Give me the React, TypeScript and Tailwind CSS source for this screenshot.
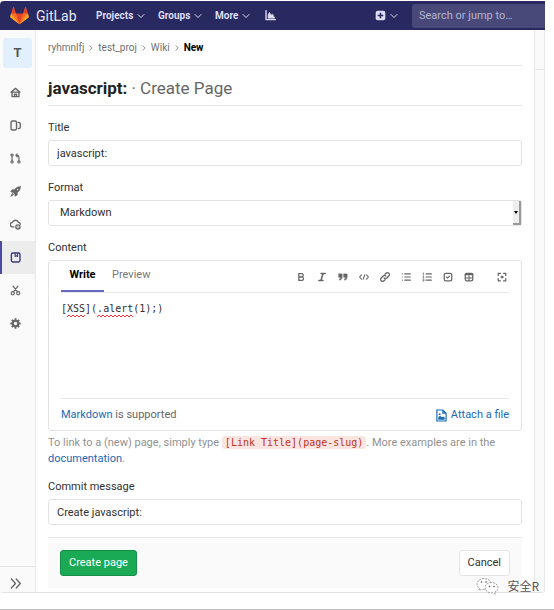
import type { ReactNode } from "react";

type IconProps = { children: ReactNode; className?: string };

function Icon({ children, className = "size-[11px]" }: IconProps) {
  return (
    <svg
      viewBox="0 0 16 16"
      className={`${className} shrink-0`}
      fill="none"
      stroke="currentColor"
      strokeWidth="2"
      strokeLinecap="round"
      strokeLinejoin="round"
      aria-hidden="true"
    >
      {children}
    </svg>
  );
}

function Tanuki() {
  return (
    <svg viewBox="0 0 36 36" className="size-[19px] shrink-0" aria-hidden="true">
      <path fill="#e24329" d="M2 14l9.38 9v-9l-4-12.28c-.205-.632-1.176-.632-1.38 0z" />
      <path fill="#e24329" d="M34 14l-9.38 9v-9l4-12.28c.205-.632 1.176-.632 1.38 0z" />
      <path fill="#e24329" d="M18 34.38 3 14h30z" />
      <path fill="#fc6d26" d="M18 34.38 11.38 14H2l4 11z" />
      <path fill="#fc6d26" d="M18 34.38 24.62 14H34l-4 11z" />
      <path fill="#fca326" d="M2 14 .1 20.16c-.18.565 0 1.2.5 1.56l17.42 12.66z" />
      <path fill="#fca326" d="m34 14 1.9 6.16c.18.565 0 1.2-.5 1.56L18 34.38z" />
    </svg>
  );
}

function Chevron() {
  return (
    <Icon className="size-2">
      <path d="m2 5 6 6 6-6" />
    </Icon>
  );
}

const navItems = [
  { label: "Projects", width: "w-[62px]" },
  { label: "Groups", width: "w-[57px]" },
  { label: "More", width: "w-[50px]" },
];

function Header() {
  return (
    <header className="flex h-[29px] items-center rounded-tl bg-[#292961] pl-[10px] text-[#dcdcf5]">
      <a href="#home" className="flex w-[86px] items-center gap-[7px] text-sm text-[#e6e6f5]">
        <Tanuki />
        GitLab
      </a>
      <nav className="flex items-center text-[10px] font-bold">
        {navItems.map((item) => (
          <button key={item.label} className={`flex items-center gap-1 ${item.width}`}>
            {item.label}
            <Chevron />
          </button>
        ))}
        <a href="#charts" aria-label="Charts">
          <Icon>
            <path d="M1.500 1v13H15" />
            <path d="M4.500 11.500V7l2-3.500L9 7.500l2-1.500 3 5.500z" fill="currentColor" strokeWidth="1" />
          </Icon>
        </a>
      </nav>
      <button className="ml-auto flex items-center gap-1" aria-label="New">
        <svg viewBox="0 0 16 16" className="size-[11px]" aria-hidden="true">
          <rect x="1" y="1" width="14" height="14" rx="3" fill="currentColor" />
          <path d="M8 4v8M4 8h8" stroke="#292961" strokeWidth="2.200" />
        </svg>
        <Chevron />
      </button>
      <input
        type="search"
        aria-label="Search or jump to"
        placeholder="Search or jump to…"
        className="ml-[14px] h-6 w-[133px] rounded-l-[3px] bg-[#484879] px-[7px] text-[11px] outline-none placeholder:text-[#b4b4d2]"
      />
    </header>
  );
}

const sideItems: { name: string; icon: ReactNode; active?: boolean }[] = [
  {
    name: "Project",
    icon: <path d="M1.500 7.500 8 2l6.500 5.500zM3 8v6h10V8M6.500 14v-3.500h3V14" />,
  },
  {
    name: "Repository",
    icon: (
      <>
        <rect x="1.500" y="1.500" width="8" height="13" rx="2" />
        <path d="M12 3.500c3 0 3 1 3 4.500s0 4.500-3 4.500" />
      </>
    ),
  },
  {
    name: "Merge requests",
    icon: (
      <g strokeWidth="1.700">
        <circle cx="3" cy="3" r="1.600" />
        <circle cx="3" cy="13" r="1.600" />
        <circle cx="13" cy="13" r="1.600" />
        <path d="M3 5v6M13 11V6c0-2-1-2.500-4-2.500M10.500 1.500 8.500 3.500l2 2" />
      </g>
    ),
  },
  {
    name: "CI / CD",
    icon: (
      <>
        <path
          fill="currentColor"
          strokeWidth="1"
          d="M15 1c-4 0-6.500 1.500-8.500 4.500H3L1 8.500l3 .5 3 3 .5 3 3-2V9.500C13.500 7.500 15 5 15 1z"
        />
        <circle cx="11" cy="5" r="1" fill="#fafafa" stroke="none" />
        <path strokeWidth="1.500" d="m3.500 11-2 3.500L5 12.500" />
      </>
    ),
  },
  {
    name: "Operations",
    icon: (
      <>
        <path d="M5.500 11.500H4A3.200 3.200 0 0 1 3.500 5 4.800 4.800 0 0 1 12.500 5c1.500.3 2.500 1.200 2.500 2.500" />
        <circle cx="11.500" cy="11.500" r="3" />
        <path d="M11.500 11.500h.01" />
      </>
    ),
  },
  {
    name: "Wiki",
    active: true,
    icon: (
      <>
        <rect x="2" y="1.500" width="12.500" height="13" rx="2" />
        <path d="M7.500 2v4.500L9.300 5.500 11 6.500V2" strokeWidth="1.500" />
      </>
    ),
  },
  {
    name: "Snippets",
    icon: (
      <g strokeWidth="1.700">
        <circle cx="4" cy="12" r="2.300" />
        <circle cx="12" cy="12" r="2.300" />
        <path d="M5 10 11.500 1.500M11 10 4.500 1.500" />
      </g>
    ),
  },
  {
    name: "Settings",
    icon: (
      <>
        <circle cx="8" cy="8" r="4" strokeWidth="3" />
        <path
          strokeLinecap="butt"
          strokeWidth="2.800"
          d="M8 .5v3M8 12.500v3M.5 8h3M12.500 8h3M2.700 2.700l2 2M11.300 11.300l2 2M2.700 13.300l2-2M11.300 4.700l2-2"
        />
      </>
    ),
  },
];

function Sidebar() {
  return (
    <aside className="flex w-9 shrink-0 flex-col border-r border-[#e8e8e8] bg-[#fafafa] text-[#666]">
      <a
        href="#project"
        className="mx-[3px] my-2 flex h-[30px] items-center justify-center rounded-[3px] bg-[#e1f0fc] text-[13px] font-bold text-[#555]"
      >
        T
      </a>
      <nav>
        {sideItems.map((item) => (
          <a
            key={item.name}
            href="#section"
            aria-label={item.name}
            className={
              item.active
                ? "flex h-[33px] items-center justify-center border-l-2 border-[#4b4ba3] bg-[#ececec] pr-[6px] text-[#393982]"
                : "flex h-[33px] items-center justify-center pr-1"
            }
          >
            <Icon>{item.icon}</Icon>
          </a>
        ))}
      </nav>
      <button
        aria-label="Expand sidebar"
        className="mt-auto flex h-[26px] items-center justify-center border-t border-[#e5e5e5] pt-2 pr-1"
      >
        <Icon>
          <path d="m2 1.500 6 6.500-6 6.500M9 1.500 15 8l-6 6.500" />
        </Icon>
      </button>
    </aside>
  );
}

const tools: { name: string; icon: ReactNode }[] = [
  { name: "Bold", icon: <path d="M4.500 2.500h4.500a2.500 2.500 0 0 1 0 5.200H4.500zM4.500 8h5.300a2.800 2.800 0 0 1 0 5.500H4.500z" /> },
  { name: "Italic", icon: <path d="M6.500 2.500H13M3 13.500h6.500M9.700 2.500l-3.400 11" strokeWidth="2.500" /> },
  {
    name: "Quote",
    icon: (
      <path
        fill="currentColor"
        strokeWidth="1"
        d="M1.500 3h5v5c0 3-1.500 4.500-4 5v-2c1.500-.5 1.800-1.500 1.800-2.800H1.500zM9.500 3h5v5c0 3-1.500 4.500-4 5v-2c1.500-.5 1.800-1.500 1.800-2.800H9.500z"
      />
    ),
  },
  { name: "Code", icon: <path d="M4 4.500.9 8 4 11.500M12 4.500 15.100 8 12 11.500M9.200 4.500l-2.400 7" strokeWidth="1.800" /> },
  {
    name: "Link",
    icon: (
      <path d="M6.500 9.500a3 3 0 0 0 4.500 0l3-3a3 3 0 0 0-4.500-4.500L8 3.500M9.500 6.500a3 3 0 0 0-4.500 0l-3 3A3 3 0 0 0 6.500 14L8 12.500" />
    ),
  },
  {
    name: "Bulleted list",
    icon: <path d="M2 3h.01M2 8h.01M2 13h.01M6 3h9M6 8h9M6 13h9" strokeWidth="1.800" />,
  },
  {
    name: "Numbered list",
    icon: (
      <>
        <path d="M6.500 3H15M6.500 8H15M6.500 13H15" strokeWidth="1.800" />
        <path d="M1.500 1.500h1v3M1.500 6.500h1.500l-1.500 3H3M1.500 11.500h1.500v3H1.500M2 13h1" strokeWidth="1.100" />
      </>
    ),
  },
  {
    name: "Task list",
    icon: (
      <>
        <rect x="2" y="2" width="12" height="12" rx="2.500" />
        <path d="m5.500 8 1.800 1.700L10.500 6.500" strokeWidth="1.800" />
      </>
    ),
  },
  {
    name: "Table",
    icon: (
      <>
        <rect x="2" y="2" width="12" height="12" rx="2.500" />
        <path d="M2.500 3.800h11" strokeWidth="3" />
        <path d="M2.500 9.500h11M8 6v7.500" strokeWidth="1.700" />
      </>
    ),
  },
  {
    name: "Full screen",
    icon: (
      <>
        <path d="M2 5.500V2h3.500M10.500 2H14v3.500M14 10.500V14h-3.500M5.500 14H2v-3.500" />
        <circle cx="8" cy="8" r="1.800" fill="currentColor" strokeWidth="1" />
      </>
    ),
  },
];

function Editor() {
  return (
    <div className="rounded-[3px] border border-[#e3e3e3] px-3">
      <div className="flex h-8 items-end justify-between border-b border-[#e8e8e8]">
        <div className="flex">
          <button className="h-8 w-[43px] border-b-2 border-[#6666c4] font-bold text-black">Write</button>
          <button className="h-8 px-2 pb-[2px] text-[#777]">Preview</button>
        </div>
        <div className="flex h-8 items-center pt-[2px] text-[#666]">
          {tools.map((tool) => (
            <button
              key={tool.name}
              aria-label={tool.name}
              className="flex w-[21px] justify-center last:ml-4 last:w-[14px]"
            >
              <Icon className="size-[10px]">{tool.icon}</Icon>
            </button>
          ))}
        </div>
      </div>
      <div className="relative h-[106px] border-b border-[#e8e8e8]">
        <textarea
          aria-label="Content"
          spellCheck={false}
          defaultValue="[XSS](.alert(1);)"
          className="block h-full w-full resize-none pt-2 font-['DejaVu_Sans_Mono',monospace] text-[10px] leading-4 text-[#303030] outline-none"
        />
        <svg
          viewBox="0 0 80 4"
          className="absolute top-[21px] left-[6px] h-1 w-20"
          fill="none"
          stroke="#e33"
          strokeWidth="1"
          aria-hidden="true"
        >
          <path d="m0 3 2-2 2 2 2-2 2 2 2-2 2 2 2-2 2 2 2-2M30 3l2-2 2 2 2-2 2 2 2-2 2 2 2-2 2 2 2-2 2 2 2-2 2 2 2-2 2 2 2-2 2 2 2-2 2 2" />
        </svg>
      </div>
      <div className="flex h-[31px] items-center justify-between pt-px text-[#666]">
        <span>
          <a href="#markdown" className="text-[#1b69b6]">
            Markdown
          </a>{" "}
          is supported
        </span>
        <button className="flex items-center gap-1 text-[#1b69b6]">
          <svg
            viewBox="0 0 12 14"
            className="h-[13px] w-[11px]"
            fill="none"
            stroke="currentColor"
            strokeWidth="1.300"
            aria-hidden="true"
          >
            <path d="M1 1h6.500L11 4.500V13H1zM7.500 1v3.500H11" />
            <path d="M2.500 11.500V9l2-2 1.500 2 2-1 1.500 1.500v2z" fill="currentColor" stroke="none" />
            <circle cx="4" cy="5.500" r="1" fill="currentColor" stroke="none" />
          </svg>
          Attach a file
        </button>
      </div>
    </div>
  );
}

const fieldClass =
  "block h-[26px] w-full rounded-[3px] border border-[#e3e3e3] bg-white px-2 text-[#303030] outline-none";
const labelClass = "mb-1 block leading-4 text-[#303030]";
const crumbs = ["ryhmnlfj", "test_proj", "Wiki"];

function Main() {
  return (
    <main className="min-w-0 flex-1 bg-white px-3 pb-1">
      <nav
        aria-label="Breadcrumb"
        className="flex h-9 items-center gap-1 border-b border-[#e5e5e5] text-[10px] text-[#707070]"
      >
        {crumbs.map((crumb) => (
          <span key={crumb} className="flex items-center gap-1">
            <a href="#crumb">{crumb}</a>
            <Icon className="size-[6px]">
              <path d="m5 2 6 6-6 6" />
            </Icon>
          </span>
        ))}
        <span className="font-bold text-black">New</span>
      </nav>
      <h1 className="flex h-10 items-center gap-1 border-b border-[#e5e5e5] pt-[6px] text-[17px] text-[#666]">
        <strong className="text-[#222]">javascript:</strong>
        <span>· Create Page</span>
      </h1>
      <form className="pt-[14px]">
        <div className="mb-[14px]">
          <label htmlFor="title" className={labelClass}>
            Title
          </label>
          <input id="title" defaultValue="javascript:" className={fieldClass} />
        </div>
        <div className="mb-[14px]">
          <label htmlFor="format" className={labelClass}>
            Format
          </label>
          <div className="relative">
            <select id="format" className={`${fieldClass} appearance-none pl-[11px]`}>
              <option>Markdown</option>
            </select>
            <span className="pointer-events-none absolute inset-y-px right-px flex w-2 items-center justify-center border-r-2 border-b-2 border-[#999] bg-[#eee]">
              <svg viewBox="0 0 4 3" className="h-[3px] w-1" aria-hidden="true">
                <path d="M0 0h4L2 3z" />
              </svg>
            </span>
          </div>
        </div>
        <div>
          <p className={labelClass}>Content</p>
          <Editor />
        </div>
        <p className="mt-1 mb-3 leading-4 text-[#919191]">
          To link to a (new) page, simply type{" "}
          <code className="rounded-[3px] bg-[#fbe5e1] px-[3px] py-px font-['DejaVu_Sans_Mono',monospace] text-[10px] text-[#c0341d]">
            [Link Title](page-slug)
          </code>
          . More examples are in the{" "}
          <a href="#docs" className="text-[#1b69b6]">
            documentation
          </a>
          .
        </p>
        <label htmlFor="commit" className={labelClass}>
          Commit message
        </label>
        <input id="commit" defaultValue="Create javascript:" className={fieldClass} />
        <div className="mt-3 flex h-[51px] items-center justify-between border-t border-[#e8e8e8] bg-[#fafafa] px-3">
          <button
            type="button"
            className="h-[26px] rounded-[3px] border border-[#168f48] bg-[#1aaa55] px-2 text-white"
          >
            Create page
          </button>
          <button
            type="button"
            className="h-[26px] rounded-[3px] border border-[#e3e3e3] bg-white px-2 text-[#303030]"
          >
            Cancel
          </button>
        </div>
      </form>
    </main>
  );
}

function Watermark() {
  return (
    <div className="absolute right-[6px] bottom-[-3px] flex items-center gap-[7px] font-['Noto_Sans_CJK_SC',sans-serif] text-xs leading-4 text-[#555]">
      <svg
        viewBox="0 0 24 18"
        className="h-[18px] w-6"
        fill="#fff"
        stroke="#888"
        strokeWidth="0.800"
        strokeDasharray="2 1"
        aria-hidden="true"
      >
        <path d="M8 1.500c-4 0-7 2.500-7 5.500 0 2 1 3.500 2.500 4.500L3 13.500l2.500-1.200c5 1.200 9.500-1.300 9.500-5.300 0-3-3-5.500-7-5.500z" />
        <path d="M15.500 5.500c-4 0-6.500 2.500-6.500 5.300s3 5.700 8 5l2.500 1.200-.5-2c2-1 3-2.500 3-4.200 0-2.800-2.500-5.300-6.500-5.300z" />
        <g fill="#555" stroke="none">
          <circle cx="5.500" cy="5" r=".8" />
          <circle cx="10" cy="5" r=".8" />
          <circle cx="13.500" cy="9.500" r=".8" />
          <circle cx="18" cy="9.500" r=".8" />
        </g>
      </svg>
      安全R
    </div>
  );
}

export default function App() {
  return (
    <div className="border-b border-[#bbb] bg-white pt-px pr-[9px] pb-4 font-[Roboto,'Noto_Sans',sans-serif] text-[11px]">
      <div className="relative rounded-b border-b border-[#e0e0e0]">
        <Header />
        <div className="flex">
          <Sidebar />
          <Main />
          <div className="w-[11px] shrink-0 border-x border-[#e8e8e8] bg-[#fafafa]">
            <div className="h-10 border-b border-[#e5e5e5]" />
          </div>
        </div>
        <Watermark />
      </div>
    </div>
  );
}
